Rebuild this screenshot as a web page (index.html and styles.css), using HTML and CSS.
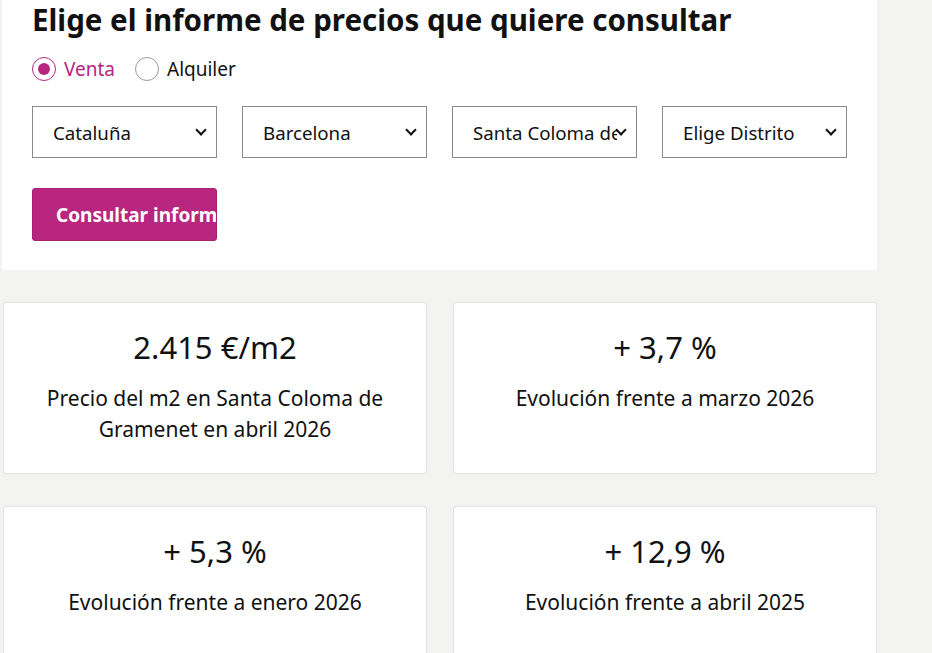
FILE: index.html
```html
<!DOCTYPE html>
<html lang="es">
<head>
    <meta charset="UTF-8">
    <meta name="viewport" content="width=device-width, initial-scale=1.0">
    <title>Informe de precios</title>
    <link rel="stylesheet" href="styles.css">
</head>
<body>

<div class="page">
    <div class="panel">
        <h1 class="title">Elige el informe de precios que quiere consultar</h1>
        <div class="radios">
            <label class="radio active"><span class="dot"></span>Venta</label>
            <label class="radio"><span class="dot"></span>Alquiler</label>
        </div>
        <div class="selects">
            <div class="select"><span class="select-text">Cataluña</span><span class="chev"></span></div>
            <div class="select"><span class="select-text">Barcelona</span><span class="chev"></span></div>
            <div class="select"><span class="select-text">Santa Coloma de Gramenet</span><span class="chev"></span></div>
            <div class="select"><span class="select-text">Elige Distrito</span><span class="chev"></span></div>
        </div>
        <button class="btn">Consultar informe</button>
    </div>

    <div class="cards">
        <div class="card">
            <div class="value">2.415 €/m2</div>
            <div class="label">Precio del m2 en Santa Coloma de Gramenet en abril 2026</div>
        </div>
        <div class="card">
            <div class="value">+ 3,7 %</div>
            <div class="label">Evolución frente a marzo 2026</div>
        </div>
        <div class="card">
            <div class="value">+ 5,3 %</div>
            <div class="label">Evolución frente a enero 2026</div>
        </div>
        <div class="card">
            <div class="value">+ 12,9 %</div>
            <div class="label">Evolución frente a abril 2025</div>
        </div>
    </div>
</div>

</body>
</html>
```

FILE: styles.css
```css
body {
    margin: 0;
    background-color: #f3f3f2;
    font-family: "Noto Sans", "Open Sans", sans-serif;
    color: #111;
}
.page {
    width: 875px;
    margin-left: 2px;
}
.panel {
    background-color: #fff;
    padding: 0 30px 29px 30px;
}
.title {
    margin: 0;
    padding-top: 1px;
    font-size: 29.5px;
    line-height: 38px;
    font-weight: bold;
}
.radios {
    display: flex;
    gap: 20px;
    margin-top: 18px;
}
.radio {
    display: flex;
    align-items: center;
    gap: 8px;
    font-size: 19px;
    line-height: 24px;
}
.radio .dot {
    width: 22px;
    height: 22px;
    border: 1px solid #999;
    border-radius: 50%;
    display: flex;
    align-items: center;
    justify-content: center;
}
.radio.active {
    color: #b5267f;
}
.radio.active .dot {
    border-color: #b5267f;
}
.radio.active .dot::after {
    content: "";
    width: 12px;
    height: 12px;
    border-radius: 50%;
    background-color: #b5267f;
}
.selects {
    display: flex;
    gap: 25px;
    margin-top: 25px;
}
.select {
    width: 185px;
    height: 52px;
    box-sizing: border-box;
    border: 1px solid #8a8a8a;
    display: flex;
    align-items: center;
    padding: 0 10px 0 20px;
    font-size: 18.7px;
}
.select-text {
    flex: 1;
    white-space: nowrap;
    overflow: hidden;
}
.chev {
    width: 6px;
    height: 6px;
    border-right: 2px solid #111;
    border-bottom: 2px solid #111;
    transform: rotate(45deg);
    margin: -4px 1px 0 0;
}
.btn {
    display: block;
    margin-top: 30px;
    width: 185px;
    height: 53px;
    padding: 0 0 0 23px;
    text-align: left;
    white-space: nowrap;
    overflow: hidden;
    background-color: #b8267f;
    color: #fff;
    border: 1px solid #a82070;
    border-radius: 3px;
    font-family: "Noto Sans", "Open Sans", sans-serif;
    font-size: 19px;
    font-weight: bold;
}
.cards {
    display: grid;
    grid-template-columns: 1fr 1fr;
    column-gap: 26px;
    row-gap: 32px;
    margin-top: 32px;
    padding-left: 1px;
}
.card {
    background-color: #fff;
    border: 1px solid #e3e3e3;
    border-radius: 3px;
    height: 172px;
    box-sizing: border-box;
    text-align: center;
    padding: 22px 30px 0 30px;
}
.value {
    font-size: 31px;
    line-height: 44px;
}
.label {
    margin-top: 14px;
    font-size: 21px;
    line-height: 31px;
}
```
